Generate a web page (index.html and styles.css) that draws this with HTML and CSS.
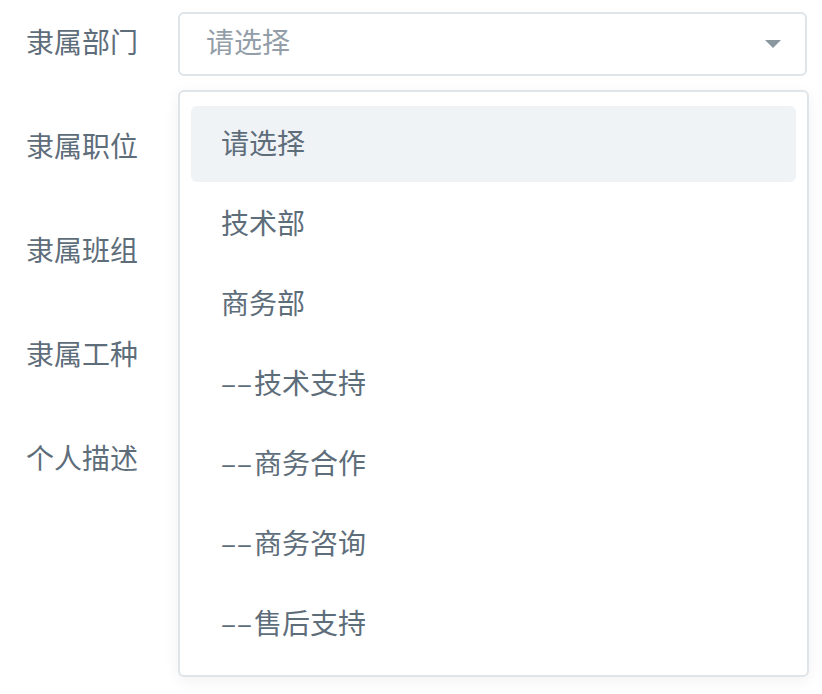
FILE: index.html
```html
<!DOCTYPE html>
<html lang="zh-CN">
<head>
    <meta charset="UTF-8">
    <meta name="viewport" content="width=device-width, initial-scale=1.0">
    <title>表单</title>
    <link rel="stylesheet" href="styles.css">
</head>
<body>
    <div class="form">
        <div class="row">
            <label class="label">隶属部门</label>
            <div class="field">
                <div class="select">
                    <span class="placeholder">请选择</span>
                    <svg class="arrow" width="16" height="8" viewBox="0 0 16 8"><path d="M0 0h16L8 8z" fill="#8a979f"/></svg>
                </div>
                <!-- 下拉菜单，盖在下面几行上 -->
                <ul class="menu">
                    <li class="active">请选择</li>
                    <li>技术部</li>
                    <li>商务部</li>
                    <li><span class="dash">––</span>技术支持</li>
                    <li><span class="dash">––</span>商务合作</li>
                    <li><span class="dash">––</span>商务咨询</li>
                    <li><span class="dash">––</span>售后支持</li>
                </ul>
            </div>
        </div>
        <div class="row"><label class="label">隶属职位</label></div>
        <div class="row"><label class="label">隶属班组</label></div>
        <div class="row"><label class="label">隶属工种</label></div>
        <div class="row"><label class="label">个人描述</label></div>
    </div>
</body>
</html>
```

FILE: styles.css
```css
* {
    margin: 0;
    padding: 0;
    box-sizing: border-box;
}
body {
    background: #fff;
    font-family: "Noto Sans CJK SC", "Noto Sans", sans-serif;
    font-size: 28px;
    color: #5e6d7a;
}
.form {
    min-height: 694px;
    padding: 12px 13px 0 26px;
}
.row {
    display: flex;
    align-items: center;
    height: 64px;
    margin-bottom: 40px;
}
.label {
    width: 152px;
    flex-shrink: 0;
    line-height: 58px;
    padding-bottom: 6px;
}
.field {
    position: relative;
    flex: 1;
    height: 64px;
}
.select {
    display: flex;
    align-items: center;
    justify-content: space-between;
    height: 64px;
    width: 629px;
    padding: 0 24px 6px 26px;
    border: 2px solid #dfe4e8;
    border-radius: 6px;
}
.placeholder {
    color: #939ea8;
}
.arrow {
    margin-top: 6px;
}
.menu {
    list-style: none;
    position: absolute;
    top: 78px;
    left: 0;
    width: 631px;
    padding: 14px 11px 13px;
    background: #fff;
    border: 2px solid #dfe4e8;
    border-radius: 6px;
    box-shadow: 0 4px 16px rgba(0, 0, 0, .06);
    z-index: 2;
}
.menu li {
    height: 76px;
    line-height: 72px;
    padding: 0 0 4px 30px;
    margin-bottom: 4px;
    border-radius: 6px;
}
.menu li:last-child {
    margin-bottom: 0;
}
.menu .active {
    background: #f0f3f6;
}
.dash {
    letter-spacing: 1px;
    margin-right: 1px;
}
```
